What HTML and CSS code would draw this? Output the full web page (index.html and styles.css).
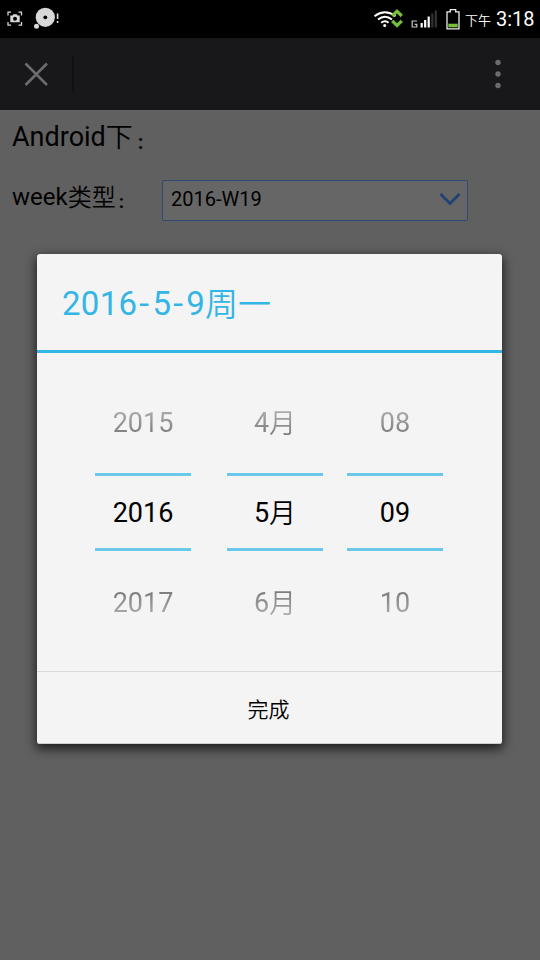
FILE: index.html
```html
<!DOCTYPE html>
<html lang="zh-CN">
<head>
<meta charset="utf-8">
<title>week</title>
<link rel="stylesheet" href="styles.css">
</head>
<body>
<div class="screen">
  <div class="status">
    <svg class="notices" width="62" height="38" viewBox="0 0 62 38">
      <g fill="none" stroke="#d8d8d8" stroke-width="1.3"><path d="M8 15.500V12.200H11M18.500 12.200H21.500V15.500M8 22V25.200H11M18.500 25.200H21.500V22"/></g>
      <path fill="#d8d8d8" d="M10.300 15.500H12.500L13.300 14.300H16.700L17.500 15.500H19.700V22.300H10.300Z"/>
      <circle cx="15" cy="18.800" r="2" fill="#000"/>
      <circle cx="45.300" cy="17.300" r="9.600" fill="#d8d8d8"/><circle cx="45.300" cy="17.300" r="1.900" fill="#000"/>
      <circle cx="36.500" cy="26.300" r="2.500" fill="#d8d8d8"/>
      <path d="M57.600 13.500V19M57.600 21V23" stroke="#d8d8d8" stroke-width="1.600"/>
    </svg>
    <svg class="radios" width="92" height="38" viewBox="370 0 92 38">
      <g fill="none" stroke="#fff" stroke-width="2"><path d="M374.500 16.200Q385 8.500 395.500 16.200"/><path d="M378 19.500Q385 14 392 19.500"/><path d="M381.200 22.700Q385 19.800 388.600 22.700"/></g>
      <circle cx="384.700" cy="25.500" r="1.500" fill="#fff"/>
      <path d="M392.200 16L397 11.300 401.800 16M392.200 20.800L397 25.500 401.800 20.800" fill="none" stroke="#77bf3b" stroke-width="3.200"/>
      <path d="M417 21H412.200V27H416.800V24.300H414.700" fill="none" stroke="#c8c8c8" stroke-width="1.200"/>
      <path d="M421.700 23V27.500M425.200 20V27.500M428.700 16.500V27.500" stroke="#fff" stroke-width="2.200"/>
      <path d="M432.300 13.500V27.500M435.800 10.500V27.500" stroke="#333" stroke-width="2.200"/>
      <path d="M450.300 9.600H455.700V11.800H459V28.800H447V11.800H450.300Z" fill="none" stroke="#eee" stroke-width="1.300"/>
      <path d="M448.300 23.700H457.700V27.300H448.300Z" fill="#77bf3b"/>
    </svg>
    <span class="ampm">下午</span><span class="clock">3:18</span>
  </div>
  <div class="bar">
    <svg width="540" height="72" viewBox="0 38 540 72">
      <path d="M25.500 63.500L47 85M47 63.500L25.500 85" stroke="#6c6c6c" stroke-width="2.500"/>
      <path d="M73 56V92" stroke="#111112" stroke-width="2"/>
      <g fill="#6c6c6c"><circle cx="498" cy="62.500" r="2.700"/><circle cx="498" cy="74" r="2.700"/><circle cx="498" cy="85.500" r="2.700"/></g>
    </svg>
  </div>
  <div class="page">
    <div class="heading">Android<span class="cjk">下</span><span class="colon">:</span></div>
    <div class="field">
      <div class="label">week<span class="cjk">类型</span><span class="colon">:</span></div>
      <div class="select"><span>2016-W19</span>
        <svg width="22" height="14" viewBox="0 0 22 14"><path d="M1.500 2L11 11.500 20.500 2" fill="none" stroke="#1f4273" stroke-width="2.700"/></svg>
      </div>
    </div>
  </div>
  <div class="dialog">
    <div class="title">2016<span class="dash">-</span>5<span class="dash">-</span>9<span class="cjk">周一</span></div>
    <div class="pickers">
      <div class="wheel year"><span class="prev">2015</span><span class="now">2016</span><span class="next">2017</span></div>
      <div class="wheel month"><span class="prev">4<i class="cjk">月</i></span><span class="now">5<i class="cjk">月</i></span><span class="next">6<i class="cjk">月</i></span></div>
      <div class="wheel day"><span class="prev">08</span><span class="now">09</span><span class="next">10</span></div>
    </div>
    <div class="done">完成</div>
  </div>
</div>
</body>
</html>
```
FILE: styles.css
```css
* { box-sizing: border-box; }
body { margin: 0; font-family: Roboto, "Noto Sans CJK SC", sans-serif; color: #000; }
svg { display: block; flex: none; }
.cjk { margin-top: -1px; font-family: "Noto Sans CJK SC", sans-serif; font-weight: 350; font-style: normal; }
.screen { position: relative; width: 540px; height: 960px; background: #606060; overflow: hidden; }
.status { display: flex; height: 38px; background: #000; color: #fff; line-height: 38px; white-space: nowrap; }
.radios { margin-left: 308px; }
.ampm { width: 34px; padding: 1px 0 0 3px; font: 350 13px/38px "Noto Sans CJK SC", sans-serif; }
.clock { font-size: 20px; }
.bar { height: 72px; background: #18181a; }
.page { padding: 9px 12px; }
.heading { height: 36px; display: flex; font-size: 27px; line-height: 36px; white-space: nowrap; }
.colon { font-size: 20px; font-weight: 700; margin-left: 5px; padding-top: 5px; }
.field { display: flex; margin-top: 24px; align-items: center; height: 42px; }
.label { display: flex; width: 150px; height: 42px; padding-top: 2px; font-size: 24px; line-height: 32px; white-space: nowrap; }
.label .colon { margin-left: 3px; font-size: 19px; }
.select { display: flex; align-items: center; justify-content: space-between; width: 306px; height: 41px; padding: 0 6px 2px 8px; border: 1px solid #304a70; border-radius: 2px; background: #666; font-size: 20px; }
.dialog { position: absolute; left: 37px; top: 254px; width: 465px; height: 490px; background: #f4f4f4; border-radius: 3px; box-shadow: 0 4px 11px 1px rgba(0,0,0,.7); }
.title { display: flex; height: 99px; padding-left: 25px; border-bottom: 3px solid #33b5e5; color: #33b5e5; font-size: 33px; line-height: 99px; letter-spacing: .3px; white-space: nowrap; }
.title .cjk { letter-spacing: 0; }
.dash { width: 15px; text-align: center; transform: scaleX(1.1); }
.pickers { display: flex; height: 319px; padding: 24px 0 0 58px; border-bottom: 1px solid #d8d8d8; }
.wheel { display: flex; flex-direction: column; width: 96px; height: 270px; font-size: 27px; text-align: center; }
.wheel span { display: flex; justify-content: center; height: 90px; line-height: 92px; }
.month { margin-left: 36px; }
.day { margin-left: 24px; }
.wheel .now { height: 78px; margin: 6px 0; line-height: 74px; border-top: 3px solid #6ac8eb; border-bottom: 3px solid #6ac8eb; }
.prev, .next { color: transparent; background-clip: text; -webkit-background-clip: text; }
.prev { background-image: linear-gradient(#d9d9d9 0, #b0b0b0 35%, #777 67%); }
.next { background-image: linear-gradient(#6c6c6c 30%, #b0b0b0 67%, #ddd 100%); }
.done { height: 72px; display: flex; justify-content: center; line-height: 72px; font-family: "Noto Sans CJK SC", sans-serif; font-size: 21px; font-weight: 350; padding-right: 2px; border-bottom: 1px solid #ccc; border-radius: 0 0 3px 3px; }
```
